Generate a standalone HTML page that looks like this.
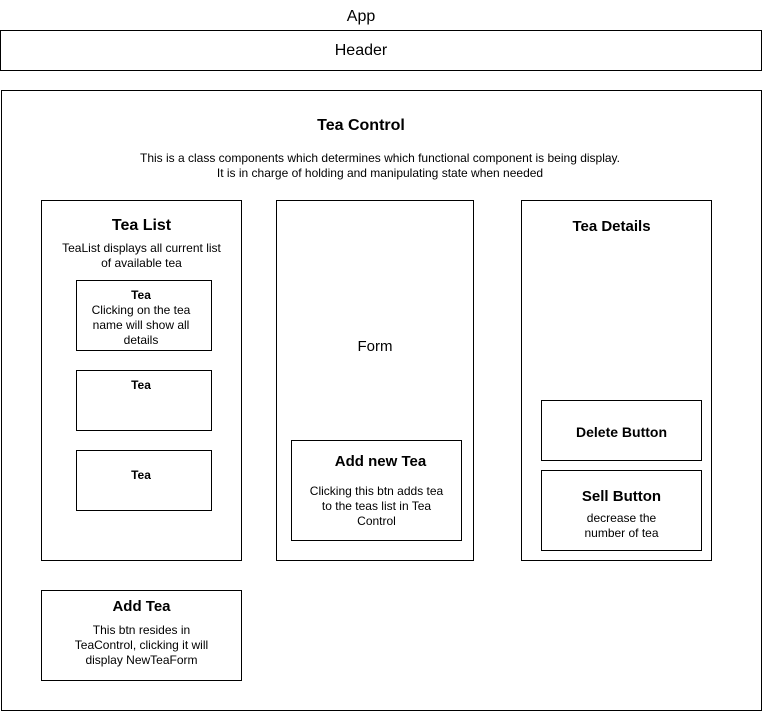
<!DOCTYPE html>
<html><head><meta charset="utf-8"><style>
body{margin:0;width:762px;height:711px;background:#fff;font-family:"Liberation Sans",Arial,sans-serif;color:#000;position:relative;overflow:hidden}
.b{position:absolute;border:1px solid #000;box-sizing:border-box;background:#fff}
.t{position:absolute;text-align:center;line-height:15px;font-size:12px}
.bold{font-weight:bold}
</style></head><body>
<div class="t" style="left:0;width:722px;top:8px;font-size:16px;line-height:18px">App</div>
<div class="b" style="left:0;top:30px;width:762px;height:41px"></div>
<div class="t" style="left:0;width:722px;top:42px;font-size:16px;line-height:18px">Header</div>

<div class="b" style="left:1px;top:90px;width:761px;height:621px"></div>
<div class="t bold" style="left:1px;width:720px;top:117px;font-size:16px;line-height:18px">Tea Control</div>
<div class="t" style="left:0px;width:760px;top:151px;line-height:15px">This is a class components which determines which functional component is being display.<br>It is in charge of holding and manipulating state when needed</div>

<div class="b" style="left:41px;top:200px;width:201px;height:361px"></div>
<div class="t bold" style="left:41px;width:201px;top:217px;font-size:16px;line-height:18px">Tea List</div>
<div class="t" style="left:41px;width:201px;top:241px">TeaList displays all current list<br>of available tea</div>

<div class="b" style="left:76px;top:280px;width:136px;height:71px"></div>
<div class="t" style="left:71px;width:140px;top:288px"><b>Tea</b><br>Clicking on the tea<br>name will show all<br>details</div>
<div class="b" style="left:76px;top:370px;width:136px;height:61px"></div>
<div class="t bold" style="left:71px;width:140px;top:378px">Tea</div>
<div class="b" style="left:76px;top:450px;width:136px;height:61px"></div>
<div class="t bold" style="left:71px;width:140px;top:468px">Tea</div>

<div class="b" style="left:276px;top:200px;width:198px;height:361px"></div>
<div class="t" style="left:276px;width:198px;top:338px;font-size:15px;line-height:18px">Form</div>
<div class="b" style="left:291px;top:440px;width:171px;height:101px"></div>
<div class="t bold" style="left:291px;width:179px;top:453px;font-size:15px;line-height:18px">Add new Tea</div>
<div class="t" style="left:291px;width:171px;top:484px">Clicking this btn adds tea<br>to the teas list in Tea<br>Control</div>

<div class="b" style="left:521px;top:200px;width:191px;height:361px"></div>
<div class="t bold" style="left:521px;width:181px;top:218px;font-size:15px;line-height:18px">Tea Details</div>
<div class="b" style="left:541px;top:400px;width:161px;height:61px"></div>
<div class="t bold" style="left:541px;width:161px;top:423px;font-size:14px;line-height:18px">Delete Button</div>
<div class="b" style="left:541px;top:470px;width:161px;height:81px"></div>
<div class="t bold" style="left:541px;width:161px;top:488px;font-size:15px;line-height:18px">Sell Button</div>
<div class="t" style="left:541px;width:161px;top:511px">decrease the<br>number of tea</div>

<div class="b" style="left:41px;top:590px;width:201px;height:91px"></div>
<div class="t bold" style="left:41px;width:201px;top:598px;font-size:15px;line-height:18px">Add Tea</div>
<div class="t" style="left:41px;width:201px;top:623px">This btn resides in<br>TeaControl, clicking it will<br>display NewTeaForm</div>
</body></html>
